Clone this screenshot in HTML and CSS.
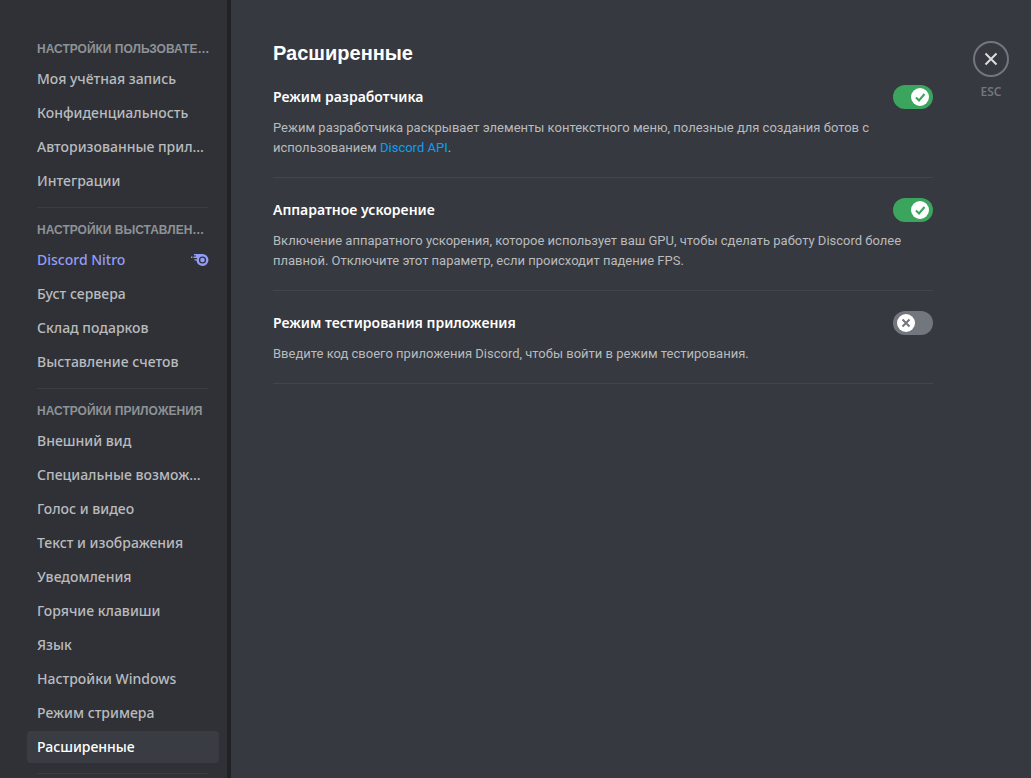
FILE: index.html
```html
<!DOCTYPE html>
<html lang="ru">
<head>
<meta charset="utf-8">
<title>Расширенные</title>
<link rel="stylesheet" href="styles.css">
</head>
<body>
<div class="app">
  <nav class="sidebar" aria-label="Настройки">
    <section class="group">
      <h2 class="group-title">Настройки пользователя</h2>
      <a class="item" href="#"><span class="label">Моя учётная запись</span></a>
      <a class="item" href="#"><span class="label">Конфиденциальность</span></a>
      <a class="item" href="#"><span class="label">Авторизованные приложения</span></a>
      <a class="item" href="#"><span class="label">Интеграции</span></a>
    </section>
    <section class="group">
      <h2 class="group-title">Настройки выставления счетов</h2>
      <a class="item nitro" href="#"><span class="label">Discord Nitro</span>
        <svg class="nitro-icon" viewBox="0 0 18 14" aria-hidden="true">
          <path fill-rule="evenodd" d="M3 1H11.500a6 6 0 1 1-6 6.500H3.500V6.200H5.600L6.300 5H2.500V3.600H5V2.500H3zM11.500 3.400a3.600 3.600 0 1 0 0 7.200a3.600 3.600 0 0 0 0-7.200z" fill="currentColor"/>
          <path d="M0 3.600h1.400v1.400H0z" fill="currentColor"/>
          <circle cx="11.500" cy="7" r="2.300" fill="currentColor"/>
        </svg>
      </a>
      <a class="item" href="#"><span class="label">Буст сервера</span></a>
      <a class="item" href="#"><span class="label">Склад подарков</span></a>
      <a class="item" href="#"><span class="label">Выставление счетов</span></a>
    </section>
    <section class="group">
      <h2 class="group-title">Настройки приложения</h2>
      <a class="item" href="#"><span class="label">Внешний вид</span></a>
      <a class="item" href="#"><span class="label">Специальные возможности</span></a>
      <a class="item" href="#"><span class="label">Голос и видео</span></a>
      <a class="item" href="#"><span class="label">Текст и изображения</span></a>
      <a class="item" href="#"><span class="label">Уведомления</span></a>
      <a class="item" href="#"><span class="label">Горячие клавиши</span></a>
      <a class="item" href="#"><span class="label">Язык</span></a>
      <a class="item" href="#"><span class="label">Настройки Windows</span></a>
      <a class="item" href="#"><span class="label">Режим стримера</span></a>
      <a class="item active" href="#" aria-current="page"><span class="label">Расширенные</span></a>
    </section>
  </nav>
  <main class="content">
    <div class="panel">
      <h1 class="title">Расширенные</h1>
      <section class="setting">
        <div class="setting-head">
          <label class="setting-name" for="dev">Режим разработчика</label>
          <span class="switch">
            <input id="dev" class="switch-input" type="checkbox" checked>
            <svg class="knob" viewBox="0 0 18 18" aria-hidden="true"><path class="mark-on" d="M5 9.500l3 3 5.500-6.500"/><path class="mark-off" d="M5.500 5.500l7 7M12.500 5.500l-7 7"/></svg>
          </span>
        </div>
        <p class="note">Режим разработчика раскрывает элементы контекстного меню, полезные для создания ботов с использованием <a class="link" href="#">Discord API</a>.</p>
      </section>
      <section class="setting">
        <div class="setting-head">
          <label class="setting-name" for="gpu">Аппаратное ускорение</label>
          <span class="switch">
            <input id="gpu" class="switch-input" type="checkbox" checked>
            <svg class="knob" viewBox="0 0 18 18" aria-hidden="true"><path class="mark-on" d="M5 9.500l3 3 5.500-6.500"/><path class="mark-off" d="M5.500 5.500l7 7M12.500 5.500l-7 7"/></svg>
          </span>
        </div>
        <p class="note">Включение аппаратного ускорения, которое использует ваш GPU, чтобы сделать работу Discord более плавной. Отключите этот параметр, если происходит падение FPS.</p>
      </section>
      <section class="setting">
        <div class="setting-head">
          <label class="setting-name" for="test">Режим тестирования приложения</label>
          <span class="switch">
            <input id="test" class="switch-input" type="checkbox">
            <svg class="knob" viewBox="0 0 18 18" aria-hidden="true"><path class="mark-on" d="M5 9.500l3 3 5.500-6.500"/><path class="mark-off" d="M5.500 5.500l7 7M12.500 5.500l-7 7"/></svg>
          </span>
        </div>
        <p class="note">Введите код своего приложения Discord, чтобы войти в режим тестирования.</p>
      </section>
    </div>
    <div class="close-area">
      <button class="close" type="button" aria-label="Закрыть">
        <svg class="close-icon" viewBox="0 0 18 18" aria-hidden="true"><path d="M3.500 3.500l11 11M14.500 3.500l-11 11"/></svg>
      </button>
      <span class="close-key">ESC</span>
    </div>
  </main>
</div>
</body>
</html>
```

FILE: styles.css
```css
* { box-sizing: border-box; }

body {
  margin: 0;
  background: #36393f;
  color: #b9bbbe;
  font-family: "Noto Sans", sans-serif;
}

.app {
  display: flex;
  height: 100vh;
  overflow: hidden;
}

.sidebar {
  flex: 0 0 231px;
  padding: 33px 8px 0 27px;
  overflow: hidden;
  background: #2f3136;
  border-right: 4px solid #202225;
}

.group { padding-bottom: 6px; }

.group::after {
  content: "";
  display: block;
  height: 1px;
  margin: 10px 11px 0 10px;
  background: #3a3c42;
}

.group-title {
  margin: 0;
  padding: 2px 8px 0 10px;
  overflow: hidden;
  color: #8e9297;
  font: 700 12px/28px "Liberation Sans", sans-serif;
  text-overflow: ellipsis;
  text-transform: uppercase;
  white-space: nowrap;
}

.item {
  display: flex;
  align-items: center;
  height: 32px;
  margin-bottom: 2px;
  padding: 0 10px;
  border-radius: 4px;
  color: #b9bbbe;
  font-size: 14px;
  font-weight: 500;
  line-height: 20px;
  text-decoration: none;
}

.label {
  flex: 1;
  overflow: hidden;
  text-overflow: ellipsis;
  white-space: nowrap;
}

.active {
  background: #393c43;
  color: #fff;
}

.nitro { color: #949cf7; }

.nitro-icon {
  width: 18px;
  height: 14px;
}

.content {
  display: flex;
  flex: 1;
  align-items: flex-start;
  justify-content: space-between;
  gap: 40px;
  padding: 41px 22px 0 42px;
}

.panel {
  flex: 1;
  max-width: 740px;
}

.title {
  margin: 0 0 20px;
  color: #fff;
  font: 700 20px/24px "Liberation Sans", sans-serif;
}

.setting {
  margin-bottom: 20px;
  padding-bottom: 19px;
  border-bottom: 1px solid #42454a;
}

.setting-head {
  display: flex;
  align-items: center;
  justify-content: space-between;
  margin-bottom: 9px;
}

.setting-name {
  color: #fff;
  font-size: 14px;
  font-weight: 600;
  line-height: 24px;
}

.note {
  margin: 0;
  font-family: Roboto, sans-serif;
  font-size: 13px;
  line-height: 20px;
}

.link {
  color: #0d9ff5;
  text-decoration: none;
}

.switch {
  position: relative;
  width: 40px;
  height: 24px;
}

.switch-input {
  width: 40px;
  height: 24px;
  margin: 0;
  appearance: none;
  border-radius: 12px;
  background: #72767d;
  cursor: pointer;
}

.switch-input:checked { background: #3ba55d; }

.knob {
  position: absolute;
  top: 3px;
  left: 4px;
  width: 18px;
  height: 18px;
  border-radius: 50%;
  background: #fff;
  fill: none;
  stroke: #72767d;
  stroke-width: 2;
  pointer-events: none;
}

.switch-input:checked + .knob {
  left: 18px;
  stroke: #3ba55d;
}

.mark-on,
.switch-input:checked + .knob .mark-off { display: none; }

.switch-input:checked + .knob .mark-on { display: inline; }

.close-area {
  display: flex;
  flex-direction: column;
  align-items: center;
  gap: 5px;
}

.close {
  display: grid;
  place-items: center;
  width: 36px;
  height: 36px;
  padding: 0;
  border: 2px solid #72767d;
  border-radius: 50%;
  background: transparent;
  cursor: pointer;
}

.close-icon {
  width: 18px;
  height: 18px;
  fill: none;
  stroke: #dcddde;
  stroke-width: 2;
}

.close-key {
  color: #72767d;
  font-size: 12px;
  font-weight: 600;
  line-height: 20px;
}
```
